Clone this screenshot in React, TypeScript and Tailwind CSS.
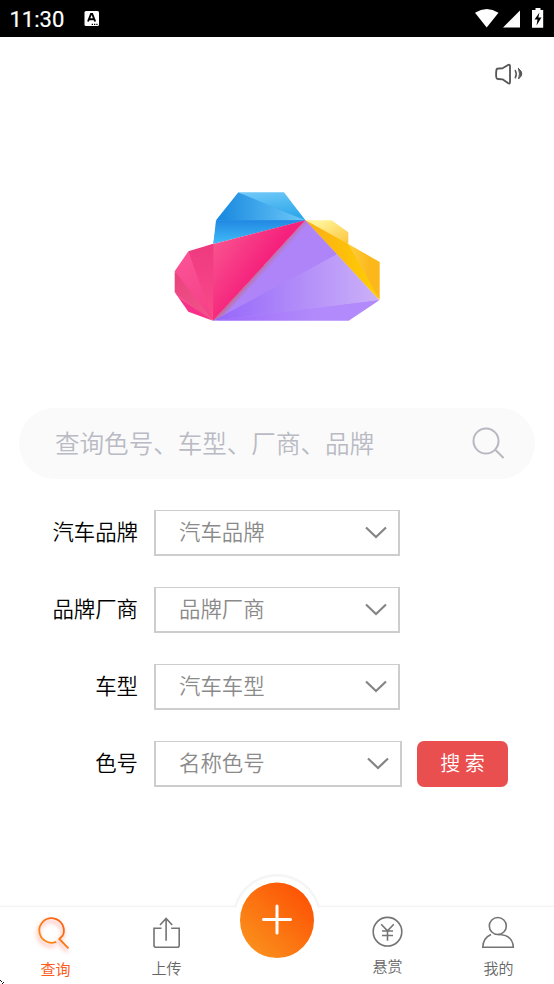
import React from 'react';

const CJK = "font-['Noto_Sans_CJK_SC',sans-serif]";

function StatusBar() {
  return (
    <header className="flex h-[37px] items-center bg-black pl-[9.500px] text-white">
      <span className="w-[74.500px] pt-[2px] font-['Roboto',sans-serif] text-[22px] leading-none font-normal [-webkit-text-stroke:0.2px_white]">11:30</span>
      <svg width="16" height="37" viewBox="0 0 16 37">
        <rect x="0.5" y="11" width="14.5" height="15" rx="1.5" fill="#fff" />
        <path d="M4 21.5 7 14h1.2l3 7.5M5.2 19.3h4.7" fill="none" stroke="#000" strokeWidth="1.9" />
        <path d="M7.7 24.4h6.5" stroke="#000" strokeWidth="1.2" strokeDasharray="1.3 1" />
      </svg>
      <svg className="ml-auto" width="80" height="37" viewBox="474 0 80 37" fill="#fff">
        <path d="M475 12.700Q486.700 5.500 498.500 12.700L486.700 27.500Z" />
        <path d="M503 27.500 520 10.500V27.500Z" />
        <path d="M535.500 8h5v2h2.700v17.700h-11.200V10h3.500Z" />
        <path d="m539.500 12.500-5 7h3l-1 6 5-8h-3.200Z" fill="#000" />
      </svg>
    </header>
  );
}

function Speaker() {
  return (
    <svg width="32" height="26" viewBox="493 61 32 26" fill="none" stroke="#555" strokeWidth="1.8" strokeLinejoin="round" strokeLinecap="round">
      <path d="M496.500 69.500Q497 68.500 498.500 68.500L502.500 68.300 508.500 64.800Q510 64.300 510 66V82Q510 84.300 508.300 83.300L502.500 79.300 498 79Q496.500 79 496.300 77.500Q495.800 73.500 496.500 69.500Z" />
      <path d="M515.300 70.500Q517.200 74 515.300 77.800" strokeWidth="1.5" />
      <path d="M518.500 68.500Q525.300 73.500 518.500 79Q520.600 74 518.500 68.500Z" fill="#555" strokeWidth="1" />
    </svg>
  );
}

function CloudLogo() {
  return (
    <svg width="226" height="150" viewBox="0 0 678 450">
      <defs>
        <linearGradient id="blueLeft"><stop stopColor="#1687de" /><stop offset="1" stopColor="#6dc8f8" /></linearGradient>
        <linearGradient id="blueTop" x1="0" y1="0" x2=".3" y2="1"><stop stopColor="#73c9fa" /><stop offset="1" stopColor="#2fa9e9" /></linearGradient>
        <linearGradient id="blueLow" x1="0" y1="0" x2="0" y2="1"><stop stopColor="#2288e3" /><stop offset="1" stopColor="#40bcf7" /></linearGradient>
        <linearGradient id="pinkMain" gradientUnits="userSpaceOnUse" x1="140" y1="190" x2="275" y2="285"><stop stopColor="#f9548f" /><stop offset="1" stopColor="#f5217c" /></linearGradient>
        <linearGradient id="pinkDark" x1="0" y1="0" x2="0" y2="1"><stop stopColor="#ee397f" /><stop offset="1" stopColor="#fa4a8b" /></linearGradient>
        <linearGradient id="pinkSide" gradientUnits="userSpaceOnUse" x1="50" y1="235" x2="147" y2="416"><stop stopColor="#fb5195" /><stop offset="1" stopColor="#f53f85" /></linearGradient>
        <linearGradient id="pinkFold" gradientUnits="userSpaceOnUse" x1="32" y1="290" x2="147" y2="416"><stop stopColor="#ea447f" /><stop offset="1" stopColor="#f2558a" /></linearGradient>
        <linearGradient id="yellowMain"><stop stopColor="#fbad16" /><stop offset="1" stopColor="#ffd000" /></linearGradient>
        <linearGradient id="yellowTop" x1="0" y1="0" x2="1" y2="1"><stop offset=".2" stopColor="#fff397" /><stop offset="1" stopColor="#fcc43d" /></linearGradient>
        <linearGradient id="yellowSide"><stop stopColor="#ffcf3f" /><stop offset=".7" stopColor="#fcb71b" /></linearGradient>
        <linearGradient id="violetMid"><stop stopColor="#9665fa" /><stop offset="1" stopColor="#cbb1f8" /></linearGradient>
        <linearGradient id="violetLow"><stop stopColor="#9c69fa" /><stop offset=".6" stopColor="#b28afb" /></linearGradient>
        <linearGradient id="foldShade" gradientUnits="userSpaceOnUse" x1="285" y1="265" x2="303" y2="281"><stop stopColor="#c07098" /><stop offset="1" stopColor="#ae84f8" stopOpacity="0" /></linearGradient>
      </defs>
      <path d="M160 113 225 35 358 35 424 115 148 184Z" fill="#3aa5ec" />
      <path d="M424 115 550 186 644 241 644 350Z" fill="#ffc81e" />
      <path d="M425 116 502 118 550 153 550 188Z" fill="#ffd75a" />
      <path d="M424 118 644 354 552 414 149 414Z" fill="#b28afb" />
      <path d="M148 186 74 211 35 269 35 329 75 386 147 413 300 250Z" fill="#f54384" />
      <path d="M156 115 223 31 424 115Z" fill="url(#blueLeft)" />
      <path d="M223 31H360L424 115Z" fill="url(#blueTop)" />
      <path d="M156 115H424L148 186Z" fill="url(#blueLow)" />
      <path d="M424 115H503L553 151V186Z" fill="url(#yellowTop)" />
      <path d="M424 115 553 186 646 355Z" fill="url(#yellowMain)" />
      <path d="M553 186 647 240V355Z" fill="url(#yellowSide)" />
      <path d="M147 416 424 115 519 217Z" fill="#ae84f8" />
      <path d="M147 416 519 217 646 355Z" fill="url(#violetMid)" />
      <path d="M147 416 646 355 554 416Z" fill="url(#violetLow)" />
      <path d="M147 416 424 115 434 127 185 396Z" fill="url(#foldShade)" />
      <path d="M148 186 424 115 147 416Z" fill="url(#pinkMain)" />
      <path d="M73 208 148 185 147 416Z" fill="url(#pinkDark)" />
      <path d="M73 208 32 268 147 416Z" fill="url(#pinkSide)" />
      <path d="M32 268V330L147 416Z" fill="url(#pinkFold)" />
      <path d="M32 330 73 389 147 416Z" fill="#f8308a" />
      <path d="M32 330 147 416 48 350Z" fill="#f4528c" />
    </svg>
  );
}

function SelectBox({ text, wide }: { text: string; wide?: boolean }) {
  return (
    <div className={`flex h-[46px] items-center justify-between border-2 border-t border-[#cdcdcd] pr-[11px] pl-[23px] text-[21.4px] text-[#8a8a8a] ${wide ? 'w-[248px]' : 'w-[246px]'}`}>
      <span className="relative -top-[2px] leading-none font-[350]">{text}</span>
      <svg width="22" height="14" viewBox="0 0 22 14" fill="none" stroke="#858585" strokeWidth="2.2">
        <path d="M1 1.500 11 11 21 1.500" />
      </svg>
    </div>
  );
}

const fields = [
  { label: '汽车品牌', value: '汽车品牌' },
  { label: '品牌厂商', value: '品牌厂商' },
  { label: '车型', value: '汽车车型' },
  { label: '色号', value: '名称色号' },
];

function NavItem({ label, active, shift = 'pt-0', children }: { label: string; active?: boolean; shift?: string; children?: React.ReactNode }) {
  return (
    <div className={`flex flex-1 flex-col items-center text-[15px] ${active ? 'text-[#fb5b1b]' : 'text-[#666]'}`}>
      <svg width="111" height="51" viewBox="0 0 111 51" fill="none" stroke="#747474" strokeWidth="1.6">{children}</svg>
      <span className={`leading-[20px] ${active ? 'font-normal' : 'font-[350]'} ${shift}`}>{label}</span>
    </div>
  );
}

export default function App() {
  return (
    <div className={`flex h-[984px] w-[554px] flex-col overflow-hidden bg-white ${CJK}`}>
      <StatusBar />
      <div className="flex justify-end pt-6 pr-[29px]"><Speaker /></div>
      <div className="mt-[95px] flex justify-center"><CloudLogo /></div>
      <div className="mx-[19px] mt-[76px] flex h-[71px] shrink-0 items-center justify-between rounded-full bg-[#fafafa] pr-[31px] pl-9">
        <span className="pb-px text-[24.55px] leading-none font-[350] text-[#b9bac4]">查询色号、车型、厂商、品牌</span>
        <svg className="mb-px" width="32" height="32" viewBox="0 0 32 32" fill="none" stroke="#b8b8c2" strokeWidth="2">
          <circle cx="14" cy="14" r="12.500" />
          <path d="m23 22.500 8.500 8.500" />
        </svg>
      </div>
      <div className="mt-[31px] flex flex-col gap-[31px]">
        {fields.map((f, i) => (
          <div key={f.value} className="flex h-[46px] items-center">
            <span className="relative -top-[2px] mr-4 w-[138px] text-right text-[21.4px] leading-none font-[350] text-black">{f.label}</span>
            <SelectBox text={f.value} wide={i === 3} />
            {i === 3 && (
              <button className="ml-[15px] h-[46px] w-[91px] rounded-[7px] bg-[#e94f4f] pb-[3px] text-[20px] font-[350] text-white">搜 索</button>
            )}
          </div>
        ))}
      </div>
      <nav className="relative mt-auto flex h-[77px] shrink-0 bg-white shadow-[0_-1px_2px_rgba(0,0,0,0.07)]">
        <NavItem label="查询" active shift="pt-[1px]">
          <defs>
            <linearGradient id="searchStroke" x1="0" y1="1" x2="1" y2="0"><stop stopColor="#fb981c" /><stop offset="1" stopColor="#fa5512" /></linearGradient>
            <filter id="searchGlow" x="-40%" y="-40%" width="180%" height="180%"><feDropShadow dx="-1" dy="3" stdDeviation="2.2" floodColor="#fa4a38" floodOpacity=".55" /></filter>
          </defs>
          <path d="M56.300 34.800A12.300 12.300 0 1 1 62.800 28.500L59.300 32 68.500 41.300" stroke="url(#searchStroke)" filter="url(#searchGlow)" strokeWidth="1.800" />
        </NavItem>
        <NavItem label="上传">
          <path d="M50.500 21.300H43.000V38.300Q43 40.300 45 40.300H66.200Q68.200 40.300 68.200 38.300V21.300H60.200M55.100 33.700V11.500M49 18 55.100 11.500 61.200 18" />
        </NavItem>
        <div className="flex-1" />
        <NavItem label="悬赏" shift="-mt-[2px]">
          <circle cx="55.500" cy="24.700" r="14.300" />
          <path d="M49.200 17.300 55.500 23.800 61.800 17.300M50 24H61M50 28.500H61M55.500 23.800V33.700" />
        </NavItem>
        <NavItem label="我的">
          <circle cx="54.800" cy="19" r="8.500" />
          <path d="M48 27.500Q40 31 39.800 40.300H70.300Q69.800 27.500 54.800 27.500" />
        </NavItem>
        <svg className="absolute -top-[36px] left-[227px]" width="100" height="90" viewBox="227 871 100 90">
          <defs><linearGradient id="addFill" x1="0.100" y1=".9" x2=".85" y2=".1"><stop stopColor="#fa911c" /><stop offset="1" stopColor="#fd5305" /></linearGradient></defs>
          <path d="M235 907.500A43.500 43.500 0 0 1 319 907.500" fill="#fff" stroke="#f5f5f5" strokeWidth="2.400" />
          <path d="M234 908H320V912H234Z" fill="#fff" />
          <ellipse cx="277" cy="920.300" rx="37" ry="37.800" fill="url(#addFill)" />
          <path d="M263.500 919.500H290.500M277 906V933" stroke="#fff" strokeWidth="3" strokeLinecap="round" />
        </svg>
      </nav>
      <svg className="absolute top-[980px] left-0" width="4" height="4" viewBox="0 0 4 4" fill="#111"><path d="M0 0h1v1H0zM1 1h1v1H1zM3 2h1v1H3zM2 3h1v1H2z" /></svg>
    </div>
  );
}
